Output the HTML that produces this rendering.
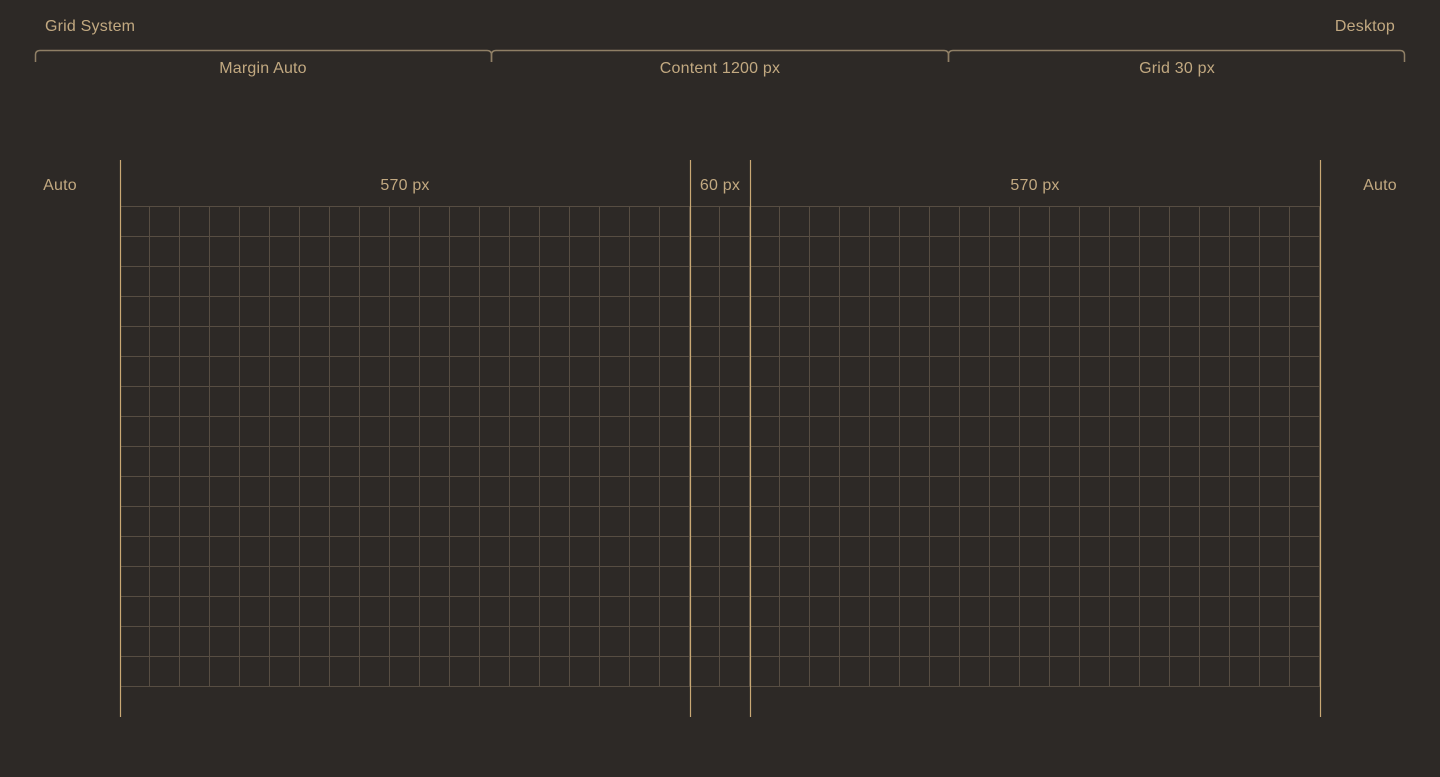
<!DOCTYPE html>
<html><head><style>
html,body{margin:0;padding:0;background:#2d2926;width:1440px;height:777px;overflow:hidden}
svg{display:block}
text{font-family:"Liberation Sans",sans-serif;font-size:16px;fill:#c2a981;letter-spacing:0.2px}
</style></head><body>
<svg width="1440" height="777" viewBox="0 0 1440 777">
<defs>
<pattern id="g" x="119" y="206" width="30" height="30" patternUnits="userSpaceOnUse">
<path d="M0 0.5H30M0.5 0V30" stroke="#574d42" stroke-width="1" fill="none"/>
</pattern>
</defs>
<rect x="120" y="206" width="1200" height="480" fill="url(#g)"/>
<line x1="120" y1="686.5" x2="1320" y2="686.5" stroke="#574d42"/>
<g stroke="#c9a874" stroke-width="1.2">
<line x1="120.5" y1="160" x2="120.5" y2="717"/>
<line x1="690.5" y1="160" x2="690.5" y2="717"/>
<line x1="750.5" y1="160" x2="750.5" y2="717"/>
<line x1="1320.5" y1="160" x2="1320.5" y2="717"/>
</g>
<g stroke="#8f7f65" stroke-width="1.5" fill="none">
<path d="M35.5 62V55Q35.5 50.5 40 50.5H487Q491.5 50.5 491.5 55V62"/>
<path d="M491.5 62V55Q491.5 50.5 496 50.5H944Q948.5 50.5 948.5 55V62"/>
<path d="M948.5 62V55Q948.5 50.5 953 50.5H1400Q1404.5 50.5 1404.5 55V62"/>
</g>
<text x="45" y="31">Grid System</text>
<text x="1395" y="31" text-anchor="end">Desktop</text>
<text x="263" y="73" text-anchor="middle">Margin Auto</text>
<text x="720" y="73" text-anchor="middle">Content 1200 px</text>
<text x="1177" y="73" text-anchor="middle">Grid 30 px</text>
<text x="60" y="190" text-anchor="middle">Auto</text>
<text x="405" y="190" text-anchor="middle">570 px</text>
<text x="720" y="190" text-anchor="middle">60 px</text>
<text x="1035" y="190" text-anchor="middle">570 px</text>
<text x="1380" y="190" text-anchor="middle">Auto</text>
</svg>
</body></html>
